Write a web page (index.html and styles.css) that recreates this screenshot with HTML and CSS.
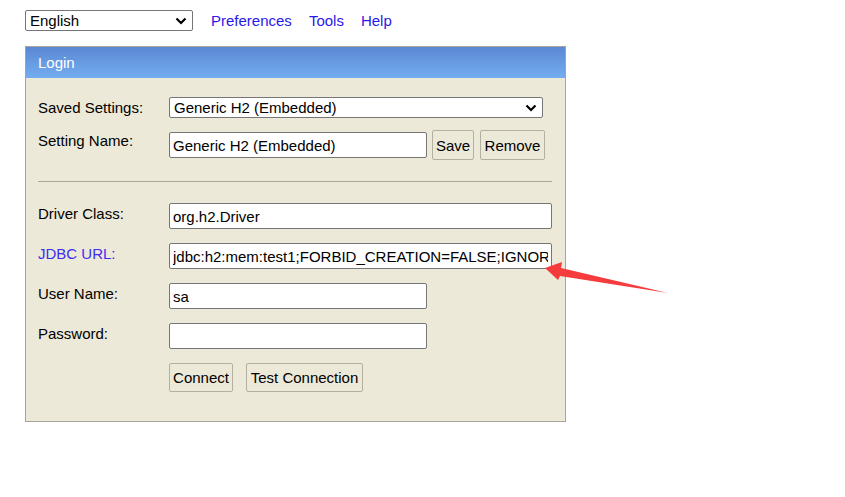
FILE: index.html
```html
<!DOCTYPE html>
<html>
<head>
<meta charset="utf-8">
<title>H2 Console</title>
<link rel="stylesheet" href="styles.css">
</head>
<body>
<div class="topbar">
  <div class="selwrap lang">
    <select class="sel"><option>English</option></select>
    <svg class="chev" width="12" height="8" viewBox="0 0 12 8"><path d="M1.5 1.5 L6 6 L10.5 1.5" fill="none" stroke="#000" stroke-width="2.2"/></svg>
  </div>
  <a href="#" class="link">Preferences</a>
  <a href="#" class="link">Tools</a>
  <a href="#" class="link">Help</a>
</div>

<div class="panel">
  <div class="panel-head">Login</div>
  <div class="panel-body">
    <div class="row r-saved">
      <div class="label">Saved Settings:</div>
      <div class="selwrap wide">
        <select class="sel"><option>Generic H2 (Embedded)</option></select>
        <svg class="chev" width="12" height="8" viewBox="0 0 12 8"><path d="M1.5 1.5 L6 6 L10.5 1.5" fill="none" stroke="#000" stroke-width="2.2"/></svg>
      </div>
    </div>
    <div class="row r-name">
      <div class="label">Setting Name:</div>
      <div class="field-group">
        <input class="txt short" value="Generic H2 (Embedded)">
        <button class="btn save">Save</button>
        <button class="btn remove">Remove</button>
      </div>
    </div>
    <hr class="sep">
    <div class="row">
      <div class="label">Driver Class:</div>
      <input class="txt long" value="org.h2.Driver">
    </div>
    <div class="row">
      <div class="label jdbc">JDBC URL:</div>
      <input class="txt long" value="jdbc:h2:mem:test1;FORBID_CREATION=FALSE;IGNORE_UNKNOWN_SETTINGS=TRUE">
    </div>
    <div class="row">
      <div class="label">User Name:</div>
      <input class="txt short" value="sa">
    </div>
    <div class="row">
      <div class="label">Password:</div>
      <input class="txt short" type="password" value="">
    </div>
    <div class="row r-btns">
      <div class="label"></div>
      <div class="field-group btns">
        <button class="btn connect">Connect</button>
        <button class="btn test">Test Connection</button>
      </div>
    </div>
  </div>
</div>

<svg class="arrow" width="845" height="497" viewBox="0 0 845 497">
  <polygon points="545,268 562,262 561,268 668,293 560,276 558,280" fill="#f53b3b"/>
</svg>
</body>
</html>
```

FILE: styles.css
```css
html, body {
  margin: 0;
  padding: 0;
  background: #fff;
}
body {
  font-family: "Liberation Sans", Arial, sans-serif;
  font-size: 15px;
  color: #000;
  position: relative;
  width: 845px;
  height: 497px;
  overflow: hidden;
}
.topbar {
  display: flex;
  align-items: center;
  padding: 10px 0 0 25px;
  height: 21px;
}
.link {
  color: #2a18e8;
  text-decoration: none;
  line-height: 21px;
}
.lang { width: 168px; margin-right: 18px; }
.topbar .link + .link { margin-left: 17px; }

.selwrap {
  position: relative;
  height: 21px;
}
.sel {
  appearance: none;
  -webkit-appearance: none;
  width: 100%;
  height: 21px;
  box-sizing: border-box;
  border: 1px solid #767676;
  border-radius: 2px;
  background: #fff;
  font-family: "Liberation Sans", Arial, sans-serif;
  font-size: 15px;
  color: #000;
  padding: 0 0 0 4px;
  margin: 0;
  line-height: 19px;
}
.chev {
  position: absolute;
  right: 6px;
  top: 7px;
  pointer-events: none;
}
.wide { width: 374px; }

.panel {
  margin: 15px 0 0 25px;
  width: 541px;
  box-sizing: border-box;
  border: 1px solid #a9a596;
  background: #ece9d8;
}
.panel-head {
  height: 31px;
  line-height: 31px;
  padding-left: 12px;
  color: #fff;
  background: linear-gradient(#5a88d2, #74adf1);
}
.panel-body {
  padding: 19px 0 29px 12px;
  display: flex;
  flex-direction: column;
  gap: 14px;
}
.row {
  display: grid;
  grid-template-columns: 131px auto;
  align-items: start;
}
.r-saved { margin-bottom: -2px; }
.label {
  padding-top: 2px;
  line-height: 17px;
}
.jdbc { color: #3d2ef0; }
.r-name .label { padding-top: 2px; }
.field-group {
  display: flex;
  align-items: center;
}
.txt {
  height: 26px;
  box-sizing: border-box;
  border: 1px solid #767676;
  border-radius: 2px;
  background: #fff;
  font-family: "Liberation Sans", Arial, sans-serif;
  font-size: 15px;
  color: #000;
  padding: 0 3px;
  margin: 0;
  outline: none;
}
.short { width: 258px; }
.long { width: 383px; }
.sep {
  margin: 7px 13px 7px 0;
  border: none;
  border-top: 1px solid #aca899;
  height: 0;
}
.btn {
  height: 30px;
  box-sizing: border-box;
  border: 1px solid #b4b0a0;
  border-radius: 2px;
  background: #ece9d8;
  font-family: "Liberation Sans", Arial, sans-serif;
  font-size: 15px;
  color: #000;
  padding: 0 3px;
  margin: 0;
}
.save { margin-left: 5px; width: 42px; }
.remove { margin-left: 6px; width: 65px; }
.btns .btn { height: 29px; }
.connect { width: 64px; }
.test { width: 117px; margin-left: 13px; }
.arrow {
  position: absolute;
  left: 0;
  top: 0;
  pointer-events: none;
}
```
